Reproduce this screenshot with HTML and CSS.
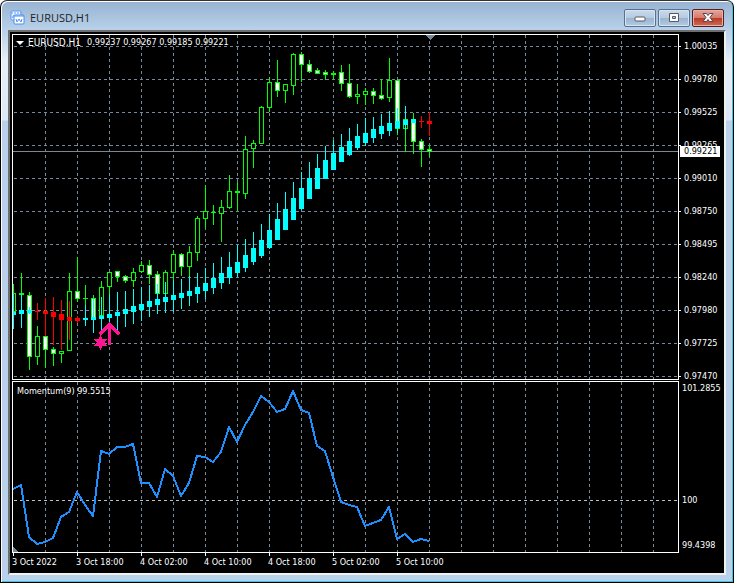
FILE: index.html
```html
<!DOCTYPE html>
<html lang="en">
<head>
  <meta charset="UTF-8">
  <meta name="viewport" content="width=device-width, initial-scale=1.0">
  <title>EURUSD,H1</title>
  <link rel="stylesheet" href="styles.css">
</head>
<body>
  <div class="window">
    <header class="titlebar">
      <svg class="app-icon" width="16" height="16" viewBox="0 0 16 16">
        <rect x="1" y="1" width="10" height="9" rx="1" fill="#eef5ff" stroke="#5b9bf0"/>
        <path d="M1 3h10" stroke="#5b9bf0" stroke-dasharray="2 1"/>
        <path d="M2 8l2-3 2 2" fill="none" stroke="#5b9bf0"/>
        <rect x="4" y="5" width="10" height="9" rx="1" fill="#fff" stroke="#4a8df0"/>
        <path d="M4 6h10" stroke="#4a8df0"/>
        <path d="M6 9l1 3 2-3 2 3 1-3" fill="none" stroke="#4a8df0"/>
      </svg>
      <h1>EURUSD,H1</h1>
      <div class="controls">
        <button type="button" aria-label="Minimize">
          <svg width="12" height="12" viewBox="0 0 12 12"><rect x="1" y="5" width="10" height="4" rx="1" fill="#fff" stroke="#555a66"/></svg>
        </button>
        <button type="button" aria-label="Maximize">
          <svg width="12" height="12" viewBox="0 0 12 12"><path fill-rule="evenodd" d="M1.500 1.500h9v8h-9zM4.500 4.500v2h3v-2z" fill="#fff" stroke="#555a66"/></svg>
        </button>
        <button type="button" class="close" aria-label="Close">
          <svg width="12" height="12" viewBox="0 0 12 12"><path d="M1 1.500h3.500L6 3.500l1.500-2H11L8 5.500l3 4H7.500L6 7.500l-1.500 2H1l3-4z" fill="#fff" stroke="#5b4450"/></svg>
        </button>
      </div>
    </header>

    <main class="chart">
      <section class="panel price-panel">
        <svg width="100%" height="344">
          <defs>
            <pattern id="gridX" width="32" height="6" patternUnits="userSpaceOnUse">
              <rect width="1" height="3" fill="#778899"/>
            </pattern>
            <pattern id="gridY" width="6" height="33" patternUnits="userSpaceOnUse" y="11">
              <rect x="1" width="3" height="1" fill="#778899"/>
            </pattern>
          </defs>
          <rect x="1" width="100%" height="100%" fill="url(#gridX)"/>
          <rect width="100%" height="100%" fill="url(#gridY)"/>
          <rect y="116" width="100%" height="1" fill="#778899"/>
          <path d="M412 0h10l-5 5z" fill="#778899"/>
          <!-- candles are drawn by chart.js -->
          <g id="candles" transform="translate(0 -35)"></g>
          <g id="averages" transform="translate(0 -35)"></g>
          <path d="M96.500 310V289M86.500 299.500l10-10 10 10" fill="none" stroke="#ff1493" stroke-width="3"/>
          <path d="M87.500 300l2 4 5-.5-3 4 3 4-5-.5-2 4-2-4-5 .5 3-4-3-4 5 .5z" fill="#ff1493"/>
        </svg>
        <div class="quote"><span class="arrow"></span><span class="symbol">EURUSD,H1</span><span>0.99237 0.99267 0.99185 0.99221</span></div>
      </section>
      <div class="axis price-axis">
        <span>1.00035</span>
        <span>0.99780</span>
        <span>0.99525</span>
        <span>0.99265</span>
        <span>0.99010</span>
        <span>0.98750</span>
        <span>0.98495</span>
        <span>0.98240</span>
        <span>0.97980</span>
        <span>0.97725</span>
        <span>0.97470</span>
        <b class="current">0.99221</b>
      </div>

      <section class="panel momentum-panel">
        <svg width="100%" height="170">
          <rect x="1" width="100%" height="100%" fill="url(#gridX)"/>
          <line x1="1" x2="100%" y1="118.500" y2="118.500" stroke="#c0c0c0" stroke-dasharray="3 3"/>
          <path d="M0 165l5 5H0z" fill="#778899"/>
          <polyline id="momentum" transform="translate(0 -382)"/>
        </svg>
        <div class="indicator">Momentum(9) 99.5515</div>
      </section>
      <div class="axis momentum-axis">
        <span>101.2855</span>
        <span class="level">100</span>
        <span>99.4398</span>
      </div>

      <div class="time-axis">
        <span>3 Oct 2022</span>
        <span>3 Oct 18:00</span>
        <span>4 Oct 02:00</span>
        <span>4 Oct 10:00</span>
        <span>4 Oct 18:00</span>
        <span>5 Oct 02:00</span>
        <span>5 Oct 10:00</span>
      </div>
    </main>
  </div>
  <script src="chart.js"></script>
</body>
</html>
```

FILE: styles.css
```css
* {
  box-sizing: border-box;
}
body {
  margin: 0;
  padding-right: 2px;
  background: #fff;
  font-family: "DejaVu Sans Condensed", "DejaVu Sans", sans-serif;
  font-size: 9px;
}
.window {
  display: flex;
  flex-direction: column;
  min-height: 100vh;
  padding: 0 7px 7px 6px;
  border: 1px solid #000;
  border-top-color: #333;
  border-radius: 7px 7px 0 0;
  background: linear-gradient(#98b4d2 0, #b9d1ea 30px, #e6eff9 60px, #dce8f6 119px, #b9d1ea 120px);
  box-shadow: inset 1px 1px 0 #fff, inset -1px -1px 0 #35c8e4;
}
.titlebar {
  display: flex;
  align-items: center;
  height: 28px;
  padding: 4px 2px 0 3px;
  margin: 1px 0 0;
  background: linear-gradient(#98b4d2, #b9d1ea);
}
.titlebar h1 {
  flex: 1;
  margin: 0 0 0 4px;
  font: 11px/16px "Open Sans", "Noto Sans", sans-serif;
  color: #222;
}
.controls {
  display: flex;
  gap: 2px;
}
.controls button {
  display: flex;
  align-items: center;
  justify-content: center;
  width: 32px;
  height: 18px;
  padding: 0;
  border: 1px solid #56708f;
  border-radius: 2px;
  background: linear-gradient(#cbdaeb 0, #b5c9df 50%, #9ab3cf 51%, #b5cae2 100%);
  box-shadow: inset 0 0 0 1px #d5e3f2;
}
.controls .close {
  border-color: #551e20;
  background: linear-gradient(#e5a59a 0, #d5796a 50%, #b83a25 51%, #cf6b57 100%);
  box-shadow: inset 0 0 0 1px #e6b1a8;
}
.chart {
  flex: 1;
  display: grid;
  grid-template-columns: 1fr 45px;
  grid-template-rows: auto auto 1fr;
  row-gap: 1px;
  padding: 2px 0 0 2px;
  margin-left: 1px;
  border: 2px solid #f0f0ec;
  border-top-color: #6e6e6e;
  border-left-color: #6e6e6e;
  background: #000;
  color: #fff;
}
.panel {
  position: relative;
  min-width: 0;
  border: 1px solid #fff;
}
.panel svg {
  display: block;
  shape-rendering: crispEdges;
}
.quote, .indicator {
  position: absolute;
  top: 2px;
  left: 3px;
  display: flex;
  align-items: center;
  line-height: 11px;
  white-space: pre;
}
.indicator {
  top: 4px;
  left: 4px;
}
.arrow {
  border: 4px solid transparent;
  border-top-color: #fff;
  border-bottom: 0;
}
.symbol {
  margin: 0 6px 0 4px;
  font-size: 10px;
}
#momentum {
  fill: none;
  stroke: #1e90ff;
  stroke-width: 2;
  stroke-linejoin: round;
}
.axis {
  position: relative;
  display: flex;
  flex-direction: column;
  line-height: 11px;
}
.price-axis {
  gap: 22px;
  padding-top: 7px;
  margin-bottom: -3px;
}
.price-axis span {
  padding-left: 5px;
  background: linear-gradient(#fff, #fff) 0 5px / 2px 1px no-repeat;
}
.current {
  position: absolute;
  top: 112px;
  left: 1px;
  padding: 0 3px 0 4px;
  background: #fff;
  color: #000;
  font-weight: normal;
}
.momentum-axis {
  padding: 2px 0 2px 3px;
}
.momentum-axis .level {
  margin: auto 0 34px;
}
.time-axis {
  grid-column: 1 / -1;
  display: flex;
  height: 20px;
  margin-top: -1px;
  line-height: 11px;
}
.time-axis span {
  width: 64px;
  padding-top: 4px;
  background: linear-gradient(#fff, #fff) 1px 0 / 1px 3px no-repeat;
  white-space: nowrap;
}
```

FILE: chart.js
```javascript
const STEP = 8;
const LIME = '#00ff00';
const CYAN = '#00ffff';
const RED = '#ff0000';

// high, low, body top, body bottom, 1 = bear candle
const candles = [
  [284, 312, 293, 312, 0], [273, 295, 293, 295, 0], [292, 370, 295, 357, 1], [326, 365, 336, 357, 0],
  [329, 368, 336, 350, 1], [347, 366, 349, 354, 1], [351, 363, 351, 354, 0], [273, 351, 291, 351, 0],
  [257, 302, 291, 299, 1], [285, 315, 298, 299, 0], [295, 318, 298, 318, 1], [281, 316, 287, 316, 0],
  [272, 294, 272, 287, 0], [271, 282, 271, 277, 1], [275, 283, 276, 281, 1], [268, 287, 272, 281, 0],
  [261, 273, 265, 272, 0], [260, 284, 265, 275, 1], [271, 294, 274, 294, 1], [270, 294, 272, 294, 0],
  [250, 280, 254, 273, 0], [253, 276, 254, 267, 1], [246, 276, 252, 267, 0], [216, 261, 218, 253, 0],
  [185, 228, 211, 219, 0], [205, 225, 212, 213, 0], [200, 242, 207, 214, 0], [175, 209, 191, 208, 0],
  [182, 211, 191, 193, 0], [136, 199, 149, 194, 0], [140, 168, 143, 149, 0], [106, 144, 107, 144, 0],
  [77, 112, 82, 108, 0], [60, 97, 82, 91, 1], [84, 103, 84, 91, 0], [53, 95, 54, 86, 0],
  [52, 82, 54, 65, 1], [60, 73, 64, 72, 1], [68, 74, 70, 74, 1], [70, 80, 72, 75, 1],
  [71, 79, 73, 75, 0], [65, 91, 72, 84, 1], [64, 98, 83, 97, 1], [84, 104, 94, 97, 0],
  [88, 105, 91, 95, 0], [88, 104, 91, 96, 1], [79, 100, 95, 99, 1], [58, 102, 80, 98, 0],
  [79, 135, 80, 129, 1], [119, 152, 119, 129, 0], [113, 154, 119, 142, 1], [139, 167, 141, 150, 1],
  [145, 157, 149, 152, 1]
];

// high, low, body top, body bottom, 1 = falling
const averages = [
  [294, 329, 312, 315, 0], [294, 328, 310, 314, 0], [307, 314, 310, 313, 0], [303, 320, 311, 312, 1],
  [298, 336, 311, 314, 1], [297, 345, 312, 317, 1], [300, 350, 314, 320, 1], [301, 340, 317, 321, 1],
  [316, 323, 318, 321, 1], [305, 326, 318, 320, 0], [299, 333, 317, 320, 0], [297, 333, 316, 319, 0],
  [294, 333, 314, 318, 0], [292, 331, 312, 316, 0], [291, 327, 309, 314, 0], [289, 324, 306, 312, 0],
  [287, 321, 304, 310, 0], [285, 317, 301, 307, 0], [284, 314, 299, 305, 0], [282, 313, 297, 302, 0],
  [280, 312, 295, 300, 0], [279, 309, 293, 298, 0], [276, 306, 291, 296, 0], [273, 303, 287, 294, 0],
  [268, 299, 283, 291, 0], [263, 294, 278, 288, 0], [257, 289, 273, 283, 0], [252, 284, 267, 278, 0],
  [245, 277, 262, 273, 0], [239, 272, 255, 268, 0], [232, 265, 248, 262, 0], [224, 258, 240, 256, 0],
  [214, 249, 230, 248, 0], [203, 240, 219, 240, 0], [192, 230, 209, 230, 0], [182, 220, 198, 220, 0],
  [172, 210, 188, 209, 0], [162, 199, 178, 199, 0], [154, 189, 168, 189, 0], [146, 179, 160, 179, 0],
  [140, 170, 153, 170, 0], [134, 162, 147, 162, 0], [128, 156, 141, 155, 0], [124, 150, 136, 148, 0],
  [118, 146, 133, 143, 0], [117, 143, 129, 138, 0], [114, 139, 126, 134, 0], [111, 136, 123, 131, 0],
  [108, 133, 121, 128, 0], [106, 130, 120, 125, 0], [119, 123, 119, 123, 0], [116, 128, 121, 122, 1],
  [112, 136, 121, 124, 1]
];

const momentum = [
  489, 485, 537, 544, 542, 538, 517, 512, 492, 505, 516, 451, 454, 447, 447, 444, 483, 483,
  497, 469, 476, 496, 483, 456, 457, 462, 452, 427, 442, 425, 412, 396, 402, 412, 409, 391,
  410, 413, 446, 451, 477, 502, 505, 507, 526, 523, 520, 507, 539, 534, 542, 539, 541
];

function addRect(parent, x, y, width, height, fill) {
  const rect = document.createElementNS('http://www.w3.org/2000/svg', 'rect');
  rect.setAttribute('x', x);
  rect.setAttribute('y', y);
  rect.setAttribute('width', width);
  rect.setAttribute('height', height);
  rect.setAttribute('fill', fill);
  parent.appendChild(rect);
}

const candleLayer = document.getElementById('candles');
candles.forEach(([high, low, top, bottom, bear], i) => {
  const x = i * STEP;
  addRect(candleLayer, x, high, 1, low - high, LIME);
  addRect(candleLayer, x - 2, top, 5, bottom - top, LIME);
  if (bottom - top > 2) {
    addRect(candleLayer, x - 1, top + 1, 3, bottom - top - 2, bear ? '#fff' : '#000');
  }
});

const averageLayer = document.getElementById('averages');
averages.forEach(([high, low, top, bottom, falling], i) => {
  const x = i * STEP;
  const color = falling ? RED : CYAN;
  addRect(averageLayer, x, high, 1, low - high, color);
  addRect(averageLayer, x - 2, top, 5, bottom - top, color);
});

document.getElementById('momentum').setAttribute('points',
  momentum.map((y, i) => i * STEP + ',' + y).join(' '));
```
